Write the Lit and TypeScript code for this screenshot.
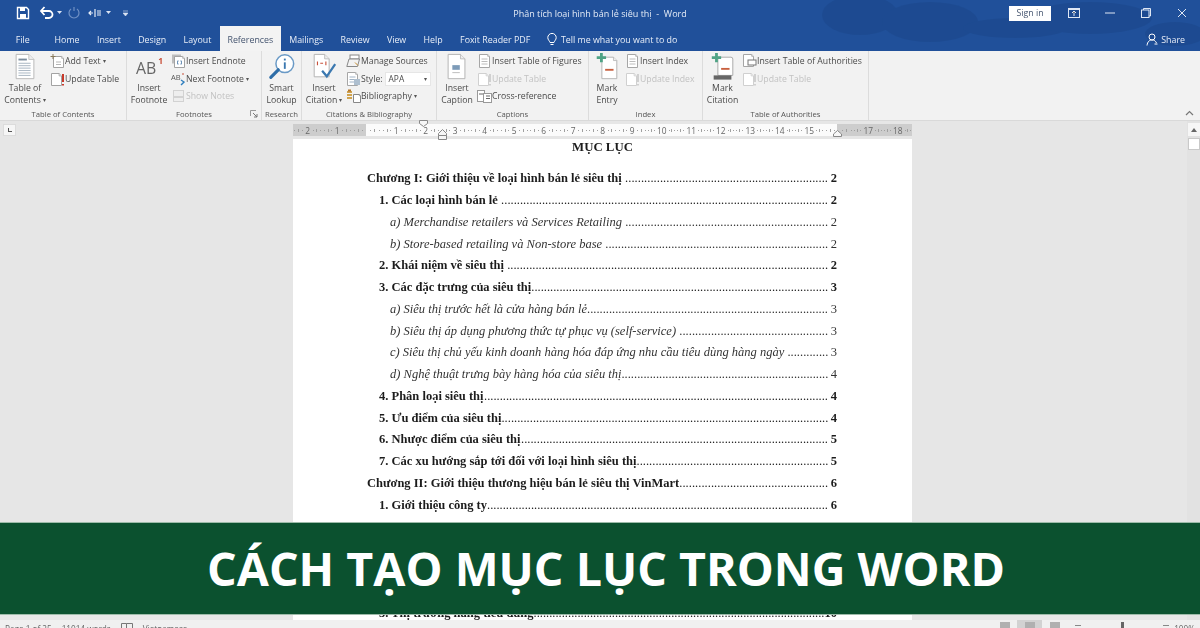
import { LitElement, html, css, svg, nothing } from "lit";
import { customElement } from "lit/decorators.js";

const GR = "#a3a3a3";
const LT = "#d0d0d0";
const page = (x: number, y: number, w: number, h: number, c = GR, f = 7) => svg`<path d="M${x} ${y}h${w - f * 0.6}l${f * 0.6} ${f * 0.6}V${y + h}H${x}z" fill="#fff" stroke=${c} stroke-width="1"/><path d="M${x + w - f * 0.6} ${y}v${f * 0.6}h${f * 0.6}" fill="#eee" stroke=${c} stroke-width=".8"/>`;
const lines = (x: number, y: number, w: number, n: number, c = "#b5b5b5", s = 2.5) => {
  const o = [];
  for (let i = 0; i < n; i++) o.push(svg`<path d="M${x} ${y + i * s}h${w}" stroke=${c} stroke-width="1"/>`);
  return o;
};
const up = (c: string) => svg`${page(1.5, 1.5, 10, 12, c, 4)}<path d="M13 2v8M13 12v1.5" stroke=${c === GR ? "#c8382a" : c} stroke-width="2"/>`;

const icons: Record<string, unknown> = {
  toc: svg`<svg width="26" height="28" viewBox="0 0 26 30">${page(3.5, 1.5, 19, 26, "#b5b5b5", 9)}<path d="M6 7h9" stroke="#7b8c9d" stroke-width="2"/>${lines(6, 11, 13, 6, "#a5b3c0", 2.6)}</svg>`,
  addText: svg`<svg width="15" height="14" viewBox="0 0 15 14">${page(3.5, 2.5, 10, 11, GR, 3)}${lines(6, 8, 5, 2)}<path d="M3 0v5M.5 2.5h5" stroke="#8a7a5a" stroke-width="1"/></svg>`,
  update: svg`<svg width="15" height="14" viewBox="0 0 15 14">${up(GR)}</svg>`,
  updateOff: svg`<svg width="15" height="14" viewBox="0 0 15 14">${up(LT)}</svg>`,
  ab: svg`<svg width="34" height="28" viewBox="0 0 34 30"><text x="3" y="23" font-family="Open Sans" font-size="17" fill="#666">AB</text><text x="27" y="12" font-family="Open Sans" font-size="9" font-weight="700" fill="#c8503a">1</text></svg>`,
  endnote: svg`<svg width="15" height="14" viewBox="0 0 15 14"><rect x="1" y=".5" width="9" height="9" fill="#bdbdbd"/>${page(3.5, 2.5, 10, 11, GR, 3)}<path d="M7 6.500q-1 2 0 4M10 6.500q1 2 0 4" stroke="#3f6f9f" fill="none"/></svg>`,
  next: svg`<svg width="15" height="14" viewBox="0 0 15 14"><text x="0" y="8" font-family="Open Sans" font-size="7.5" fill="#555">AB</text><path d="M12 1v2" stroke="#c8503a"/><path d="M10 8l3 2-3 3" stroke="#2f7fbf" stroke-width="1.4" fill="none"/></svg>`,
  notes: svg`<svg width="15" height="14" viewBox="0 0 15 14"><rect x="2.5" y="1.5" width="10" height="11" fill="#eee" stroke="#d2d2d2"/><path d="M3 8h9" stroke="#d2d2d2" stroke-width="2"/></svg>`,
  lookup: svg`<svg width="30" height="28" viewBox="0 0 30 30"><circle cx="18" cy="11.5" r="9.5" fill="#fff" stroke="#6a9ac6" stroke-width="1.6"/><path d="M18 10v7" stroke="#3b78b0" stroke-width="2"/><path d="M18 6v2" stroke="#3b78b0" stroke-width="2"/><path d="M11 18L3 26" stroke="#2f6ea8" stroke-width="3.4" stroke-linecap="round"/></svg>`,
  citation: svg`<svg width="30" height="28" viewBox="0 0 30 30">${page(4.5, 1.5, 16, 24, "#b0b0b0", 8)}<path d="M8 9v4M11 11h3M17 9v4" stroke="#c8503a" stroke-width="1.2"/><path d="M13 19l5 6 9-13" stroke="#3b78b0" stroke-width="2.4" fill="none"/></svg>`,
  manage: svg`<svg width="15" height="14" viewBox="0 0 15 14"><rect x="4" y="1" width="9" height="4" fill="#fff" stroke="#888"/><path d="M.8 12.500L3 5h10.500l-2 7.500z" fill="#f2f2f2" stroke="#888"/><path d="M9 8.500l3 3" stroke="#c68b2c"/></svg>`,
  style: svg`<svg width="15" height="14" viewBox="0 0 15 14">${page(1.5, .5, 10, 13, "#a6a6a6", 3)}${lines(3.5, 5, 6, 3, "#a0b3c6", 2.5)}<rect x="8" y="7" width="6" height="6" fill="#aebfcf"/></svg>`,
  bib: svg`<svg width="15" height="14" viewBox="0 0 15 14"><path d="M1 3h5M1 6h5M1 9h5" stroke="#d0a44f" stroke-width="2"/><rect x="2" y=".5" width="3" height="2" fill="#b5762a"/>${page(7.5, 5.5, 7, 8, "#888", 2)}</svg>`,
  caption: svg`<svg width="22" height="28" viewBox="0 0 22 30">${page(1.5, 1.5, 18, 26, "#b0b0b0", 8)}<rect x="6" y="13" width="8" height="5" fill="#7d9bb8"/><path d="M6 21h8" stroke="#bbb"/></svg>`,
  figures: svg`<svg width="15" height="14" viewBox="0 0 15 14">${page(2.5, .5, 10, 13, "#a6a6a6", 3)}${lines(4.5, 5, 6, 3, "#bcbcbc", 2.5)}</svg>`,
  cross: svg`<svg width="15" height="14" viewBox="0 0 15 14"><rect x=".5" y="1.5" width="7" height="11" fill="#fff" stroke="#999"/><rect x="6.5" y="4.5" width="8" height="9" fill="#fff" stroke="#999"/><path d="M2 5h4M9 7h4M9 9.500h4" stroke="#666"/></svg>`,
  entry: svg`<svg width="24" height="28" viewBox="0 0 24 30">${page(6.5, 4.5, 16, 23, "#b0b0b0", 6)}<path d="M10 18h9" stroke="#c8603f" stroke-width="2"/><path d="M6 0v10M1 5h10" stroke="#4fa385" stroke-width="3"/></svg>`,
  cite: svg`<svg width="26" height="28" viewBox="0 0 26 30"><path d="M7.500 4.500h14a2 2 0 0 1 2 2V24h-16z" fill="#fff" stroke="#a6a6a6"/><path d="M11 17h9" stroke="#c8603f" stroke-width="2"/><rect x="3" y="24" width="19" height="4.500" fill="#666"/><path d="M6 0v10M1 5h10" stroke="#4fa385" stroke-width="3"/></svg>`,
  authorities: svg`<svg width="15" height="14" viewBox="0 0 15 14">${page(1.5, .5, 10, 12, "#a6a6a6", 3)}<rect x="6" y="6" width="8" height="5" fill="#fff" stroke="#777"/></svg>`,
};

type Small = { icon: string; text: string; off?: boolean; caret?: boolean; combo?: boolean };
type Group = { w: number; bigW: number; big: [string, string, string, boolean?]; small: Small[]; label: string; launcher?: boolean };

const groups: Group[] = [
  { w: 127, bigW: 50, big: ["toc", "Table of", "Contents", true], label: "Table of Contents", small: [
    { icon: "addText", text: "Add Text", caret: true }, { icon: "update", text: "Update Table" }] },
  { w: 135, bigW: 44, big: ["ab", "Insert", "Footnote"], label: "Footnotes", launcher: true, small: [
    { icon: "endnote", text: "Insert Endnote" }, { icon: "next", text: "Next Footnote", caret: true }, { icon: "notes", text: "Show Notes", off: true }] },
  { w: 40, bigW: 39, big: ["lookup", "Smart", "Lookup"], label: "Research", small: [] },
  { w: 135, bigW: 44, big: ["citation", "Insert", "Citation", true], label: "Citations & Bibliography", small: [
    { icon: "manage", text: "Manage Sources" }, { icon: "style", text: "Style:", combo: true }, { icon: "bib", text: "Bibliography", caret: true }] },
  { w: 152, bigW: 40, big: ["caption", "Insert", "Caption"], label: "Captions", small: [
    { icon: "figures", text: "Insert Table of Figures" }, { icon: "updateOff", text: "Update Table", off: true }, { icon: "cross", text: "Cross-reference" }] },
  { w: 114, bigW: 36, big: ["entry", "Mark", "Entry"], label: "Index", small: [
    { icon: "figures", text: "Insert Index" }, { icon: "updateOff", text: "Update Index", off: true }] },
  { w: 166, bigW: 39, big: ["cite", "Mark", "Citation"], label: "Table of Authorities", small: [
    { icon: "authorities", text: "Insert Table of Authorities" }, { icon: "updateOff", text: "Update Table", off: true }] },
];

const tabs = ["File", "Home", "Insert", "Design", "Layout", "References", "Mailings", "Review", "View", "Help", "Foxit Reader PDF"];

const toc: [number, string, string][] = [
  [0, "Chương I: Giới thiệu về loại hình bán lẻ siêu thị ", "2"],
  [1, "1. Các loại hình bán lẻ ", "2"],
  [2, "a) Merchandise retailers và Services Retailing ", "2"],
  [2, "b) Store-based retailing và Non-store base ", "2"],
  [1, "2. Khái niệm về siêu thị ", "2"],
  [1, "3. Các đặc trưng của siêu thị", "3"],
  [2, "a) Siêu thị trước hết là cửa hàng bán lẻ", "3"],
  [2, "b) Siêu thị áp dụng phương thức tự phục vụ (self-service) ", "3"],
  [2, "c) Siêu thị chủ yếu kinh doanh hàng hóa đáp ứng nhu cầu tiêu dùng hàng ngày ", "3"],
  [2, "d) Nghệ thuật trưng bày hàng hóa của siêu thị", "4"],
  [1, "4. Phân loại siêu thị", "4"],
  [1, "5. Ưu điểm của siêu thị", "4"],
  [1, "6. Nhược điểm của siêu thị", "5"],
  [1, "7. Các xu hướng sắp tới đối với loại hình siêu thị", "5"],
  [0, "Chương II: Giới thiệu thương hiệu bán lẻ siêu thị VinMart", "6"],
  [1, "1. Giới thiệu công ty", "6"],
];

const rulerLabels = ["2", "1", "", ...Array.from({ length: 18 }, (_, i) => (i === 15 ? "" : String(i + 1)))];
const DOT_W = 3.125;

@customElement("app-root")
export class AppRoot extends LitElement {
  static styles = css`
    :host { display: block; width: 1200px; height: 628px; position: relative; overflow: hidden; font-family: "Open Sans", sans-serif; }
    .window { width: 1200px; height: 628px; display: flex; flex-direction: column; background: #e6e6e6; filter: blur(.35px); }
    .head { height: 51px; background: #20509a; color: #fff; position: relative; flex: none; display: flex; flex-direction: column; overflow: hidden; }
    .clouds { position: absolute; left: 800px; top: 0; }
    .titlebar { height: 26px; display: grid; grid-template-columns: 1fr auto 1fr; align-items: center; position: relative; }
    .qa { display: flex; align-items: center; padding-left: 16px; }
    .qa svg { display: block; }
    .title { font-size: 9px; color: #e4ebf6; }
    .winctl { display: flex; justify-content: flex-end; align-items: center; }
    .signin { width: 42px; height: 15px; background: #fff; color: #44546f; font-size: 8.8px; display: flex; align-items: center; justify-content: center; margin-right: 5px; }
    .wbtn { width: 36px; display: flex; justify-content: center; }
    .tabs { height: 25px; display: flex; align-items: stretch; padding-left: 7px; position: relative; font-size: 8.85px; color: #e8eef8; }
    .tab { padding: 2px 8.7px 0; display: flex; align-items: center; box-sizing: border-box; }
    .tab.file { margin-right: 7.5px; }
    .tab.active { background: #f3f3f3; color: #44546f; padding: 2px 7.3px 0; }
    .tell { display: flex; align-items: center; gap: 4px; margin-left: 8px; padding-top: 2px; }
    .share { margin-left: auto; display: flex; align-items: center; gap: 3px; padding: 2px 15px 0 0; }
    .ribbon { height: 69px; flex: none; background: #f2f2f2; display: flex; color: #4a4a4a; font-size: 8.7px; position: relative; border-bottom: 1px solid #d9d9d9; }
    .group { flex: none; border-right: 1px solid #dcdcdc; box-sizing: border-box; display: flex; flex-direction: column; position: relative; }
    .gbody { height: 57px; display: flex; }
    .glabel { text-align: center; font-size: 7.7px; color: #555; line-height: 12px; }
    .launcher { position: absolute; right: 3px; bottom: 2px; }
    .big { flex: none; display: flex; flex-direction: column; align-items: center; padding-top: 2px; }
    .bi { height: 28px; display: flex; align-items: center; justify-content: center; }
    .lbl { line-height: 12.4px; white-space: nowrap; text-align: center; margin-top: 1px; }
    .caret { font-size: 6px; vertical-align: 1px; color: #555; margin-left: 2px; }
    .smalls { display: flex; flex-direction: column; padding-top: 1.5px; }
    .s { height: 17.5px; display: flex; align-items: center; white-space: nowrap; }
    .s svg { flex: none; }
    .s.off { color: #c2c2c2; }
    .combo { width: 46px; height: 14px; background: #fff; border: 1px solid #e6e6e6; margin-left: 2px; display: flex; align-items: center; justify-content: space-between; padding: 0 3px; box-sizing: border-box; font-size: 8.4px; }
    .collapse { position: absolute; left: 1185px; top: 59px; }
    .work { flex: 1; display: flex; min-height: 0; }
    .canvas { flex: 1; display: flex; flex-direction: column; min-width: 0; }
    .rulerrow { height: 18px; flex: none; display: flex; align-items: center; padding-left: 3px; box-sizing: border-box; }
    .tabstop { width: 13px; height: 12px; background: #f6f6f6; border: 1px solid #dcdcdc; box-sizing: border-box; margin-right: 277px; position: relative; }
    .tabstop::after { content: ""; position: absolute; left: 4px; top: 3px; width: 3px; height: 3px; border-left: 1px solid #555; border-bottom: 1px solid #555; }
    .ruler { width: 619px; height: 12px; position: relative; display: flex; background: linear-gradient(90deg, #cdcdcd 73px, #fbfbfb 73px, #fbfbfb 544px, #cdcdcd 544px); font-size: 8.4px; color: #666; }
    .cell { width: 29.5px; flex: none; display: flex; align-items: center; justify-content: space-around; }
    .cell i { width: 1px; height: 1px; background: #a0a0a0; display: block; }
    .cell i.t { height: 3px; }
    .marker { position: absolute; }
    .page { width: 619px; margin-left: 293px; flex: 1; min-height: 0; background: #fff; overflow: hidden; font-family: "Liberation Serif", serif; font-size: 12.5px; color: #1c1c1c; box-sizing: border-box; padding: 0 75px 0 74px; }
    .h { text-align: center; font-weight: 700; line-height: 16px; margin: 0 0 13.4px 0; font-size: 12.8px; padding-left: 1px; }
    .row { height: 21.75px; line-height: 21.75px; display: flex; white-space: pre; }
    .gap { height: 87px; }
    .d { flex: 1; min-width: 0; text-align: right; font-weight: 400; font-style: normal; overflow: hidden; }
    .n { flex: none; min-width: 9px; text-align: right; font-weight: 700; font-style: normal; }
    .l0, .l1 { font-weight: 700; }
    .l1 { padding-left: 12px; }
    .l2 { padding-left: 23px; font-style: italic; color: #333; }
    .l2 .n { font-weight: 400; }
    .scroll { width: 13px; flex: none; background: #e2e2e2; display: flex; flex-direction: column; align-items: center; padding-top: 2px; gap: 2px; box-sizing: border-box; }
    .sbtn { width: 12px; height: 13px; background: #f6f6f6; display: flex; align-items: center; justify-content: center; }
    .sthumb { width: 12px; height: 12px; background: #fff; border: 1px solid #c9c9c9; box-sizing: border-box; }
    .status { height: 8px; flex: none; background: #f0f0f0; position: relative; overflow: hidden; font-size: 8.2px; color: #666; display: flex; }
    .st { display: flex; gap: 10px; padding: 3px 0 0 5px; line-height: 11px; white-space: nowrap; align-items: flex-start; }
    .sr { margin-left: auto; display: flex; align-items: flex-start; padding: 0 5px 0 0; line-height: 11px; }
    .vb { width: 25px; height: 8px; display: flex; justify-content: center; padding-top: 2px; box-sizing: border-box; }
    .vb.on { background: #d2d2d2; }
    .vb b { width: 10px; height: 8px; background: #b0b0b0; display: block; }
    .zoomer { display: flex; align-items: center; width: 107px; padding: 3px 5px 0 8px; box-sizing: border-box; justify-content: space-between; height: 8px; }
    .zoomer b { display: block; background: #666; width: 3px; height: 8px; }
    .zoomer u { display: block; background: #888; width: 6px; height: 1px; }
    .pct { padding-top: 3px; }
    .banner { position: absolute; left: 0; top: 522px; width: 1200px; height: 93px; box-sizing: border-box; background: #0b512f; border-top: 1.5px solid #9dbba9; border-bottom: 1.5px solid #9dbba9; color: #fff; font-family: "Open Sans", sans-serif; font-weight: 700; font-size: 46.6px; display: flex; align-items: center; justify-content: center; padding-left: 12px; line-height: 1; white-space: nowrap; }
  `;

  firstUpdated() {
    this.renderRoot.querySelectorAll<HTMLElement>(".d").forEach((el) => {
      const w = el.clientWidth;
      const n = Math.floor(w / DOT_W);
      el.textContent = ".".repeat(n);
      el.style.letterSpacing = `${w / n - DOT_W - 0.001}px`;
    });
  }

  private smallItem(s: Small) {
    return html`<div class="s ${s.off ? "off" : ""}">${icons[s.icon]}<span>${s.text}</span>${s.caret ? html`<span class="caret">▾</span>` : nothing}${s.combo ? html`<span class="combo"><span>APA</span><span class="caret">▾</span></span>` : nothing}</div>`;
  }

  private group(g: Group) {
    return html`<div class="group" style="width:${g.w}px">
      <div class="gbody">
        <div class="big" style="width:${g.bigW}px">
          <div class="bi">${icons[g.big[0]]}</div>
          <div class="lbl">${g.big[1]}<br />${g.big[2]}${g.big[3] ? html`<span class="caret">▾</span>` : nothing}</div>
        </div>
        ${g.small.length ? html`<div class="smalls">${g.small.map((s) => this.smallItem(s))}</div>` : nothing}
      </div>
      <div class="glabel">${g.label}</div>
      ${g.launcher ? html`<svg class="launcher" width="8" height="8" viewBox="0 0 8 8"><path d="M.5 6V.5H6" stroke="#999" fill="none"/><path d="M3 3l4 4M7 4v3H4" stroke="#777" fill="none"/></svg>` : nothing}
    </div>`;
  }

  private tocRow([l, t, n]: [number, string, string]) {
    return html`<div class="row l${l}"><span>${t}</span><span class="d"></span><span class="n">${n}</span></div>`;
  }

  render() {
    return html`
      <div class="window">
        <div class="head">
          <svg class="clouds" width="400" height="51" viewBox="0 0 400 51"><g fill="#1b4689" opacity=".5"><ellipse cx="60" cy="15" rx="38" ry="20"/><ellipse cx="130" cy="22" rx="48" ry="20"/><ellipse cx="215" cy="28" rx="52" ry="10"/><ellipse cx="290" cy="18" rx="62" ry="16"/><ellipse cx="375" cy="34" rx="30" ry="12"/></g></svg>
          <div class="titlebar">
            <div class="qa">
              <svg width="14" height="14" viewBox="0 0 14 14"><path d="M1.500 1.500h9l2 2v9h-11z" fill="none" stroke="#fff" stroke-width="1.4"/><rect x="4" y="1.500" width="5" height="3.500" fill="#fff"/><rect x="4" y="8" width="6" height="4.500" fill="#fff"/></svg>
              <svg style="margin-left:9px" width="16" height="14" viewBox="0 0 16 14"><path d="M2 5h8a3.500 3.500 0 0 1 0 7H6" stroke="#fff" stroke-width="1.8" fill="none"/><path d="M5.500 1L2 5l3.500 4" stroke="#fff" stroke-width="1.8" fill="none"/></svg>
              <svg style="margin-left:2px" width="5" height="4" viewBox="0 0 5 4"><path d="M0 0h5L2.500 3z" fill="#dbe4f3"/></svg>
              <svg style="margin-left:6px" width="12" height="14" viewBox="0 0 12 14"><path d="M3 3a5 5 0 1 0 6 0M6 1v4" stroke="#6f90c4" stroke-width="1.2" fill="none"/></svg>
              <svg style="margin-left:8px" width="14" height="10" viewBox="0 0 14 10"><path d="M7 1v8M1 5h4M3 3L1 5l2 2M9 3h4M9 5h4M9 7h4" stroke="#e7edf7" stroke-width="1.2" fill="none"/></svg>
              <svg style="margin-left:4px" width="5" height="4" viewBox="0 0 5 4"><path d="M0 0h5L2.500 3z" fill="#dbe4f3"/></svg>
              <svg style="margin-left:12px" width="5" height="6" viewBox="0 0 5 6"><path d="M0 1h5M0 3h5L2.500 6z" stroke="#dbe4f3" stroke-width=".6" fill="#dbe4f3"/></svg>
            </div>
            <div class="title">Phân tích loại hình bán lẻ siêu thị&nbsp; -&nbsp; Word</div>
            <div class="winctl">
              <div class="signin">Sign in</div>
              <div class="wbtn"><svg width="12" height="10" viewBox="0 0 12 10"><rect x=".5" y=".5" width="11" height="9" fill="none" stroke="#dfe7f4"/><path d="M6 8V3M4 5l2-2 2 2M1 1.500h10" stroke="#dfe7f4"/></svg></div>
              <div class="wbtn"><svg width="10" height="2" viewBox="0 0 10 2"><path d="M0 1h10" stroke="#dfe7f4"/></svg></div>
              <div class="wbtn"><svg width="10" height="10" viewBox="0 0 10 10"><rect x=".5" y="2" width="7.500" height="7.500" fill="none" stroke="#dfe7f4"/><path d="M2.500 2V.5h7V8H8" fill="none" stroke="#dfe7f4"/></svg></div>
              <div class="wbtn"><svg width="10" height="10" viewBox="0 0 10 10"><path d="M1 1l8 8M9 1l-8 8" stroke="#dfe7f4"/></svg></div>
            </div>
          </div>
          <div class="tabs">
            ${tabs.map((t, i) => html`<div class="tab ${i === 0 ? "file" : ""} ${t === "References" ? "active" : ""}">${t}</div>`)}
            <div class="tell">
              <svg width="10" height="13" viewBox="0 0 10 13"><path d="M3 9.500C2.500 7.500.8 7 .8 4.600a4.200 4.200 0 0 1 8.400 0C9.200 7 7.500 7.500 7 9.500zM3.500 11.500h3" stroke="#fff" fill="none"/></svg>
              <span>Tell me what you want to do</span>
            </div>
            <div class="share">
              <svg width="12" height="13" viewBox="0 0 12 13"><circle cx="6" cy="4" r="3" fill="none" stroke="#fff"/><path d="M1 12.500c.5-4 2.500-5.500 5-5.500s3.500 1 4.500 3M8.500 11h3" stroke="#fff" fill="none"/></svg>
              <span>Share</span>
            </div>
          </div>
        </div>
        <div class="ribbon">
          ${groups.map((g) => this.group(g))}
          <svg class="collapse" width="9" height="6" viewBox="0 0 9 6"><path d="M1 5l3.500-3.500L8 5" stroke="#777" stroke-width="1.2" fill="none"/></svg>
        </div>
        <div class="work">
          <div class="canvas">
            <div class="rulerrow">
              <div class="tabstop"></div>
              <div class="ruler">
                ${rulerLabels.map((l) => html`<div class="cell"><i></i><i class="t"></i><i></i><span>${l}</span><i></i><i class="t"></i><i></i></div>`)}
                <svg class="marker" style="left:126px;top:-4px" width="9" height="7" viewBox="0 0 9 7"><path d="M.5.5h8v3l-4 3-4-3z" fill="#f7f7f7" stroke="#888"/></svg>
                <svg class="marker" style="left:145px;top:5px" width="9" height="11" viewBox="0 0 9 11"><path d="M.5 4.500l4-4 4 4v2h-8zM.5 6.500h8v4h-8z" fill="#f7f7f7" stroke="#888"/></svg>
                <svg class="marker" style="left:540px;top:6px" width="9" height="7" viewBox="0 0 9 7"><path d="M.5 6.500V4l4-3.500 4 3.500v2.500z" fill="#f7f7f7" stroke="#888"/></svg>
              </div>
            </div>
            <div class="page">
              <div class="h">MỤC LỤC</div>
              ${toc.map((r) => this.tocRow(r))}
              <div class="gap"></div>
              ${this.tocRow([1, "3. Thị trường hàng tiêu dùng", "10"])}
            </div>
          </div>
          <div class="scroll">
            <div class="sbtn"><svg width="6" height="4" viewBox="0 0 6 4"><path d="M3 0l3 4H0z" fill="#666"/></svg></div>
            <div class="sthumb"></div>
          </div>
        </div>
        <div class="status">
          <div class="st"><span>Page 1 of 25</span><span>11014 words</span><svg width="12" height="10" viewBox="0 0 12 10"><path d="M.5 9.500v-9h5v9M5.500.5h6v9" stroke="#777" fill="none"/></svg><span>Vietnamese</span></div>
          <div class="sr">
            <div class="vb"><b></b></div><div class="vb on"><b></b></div><div class="vb"><b></b></div>
            <div class="zoomer"><u></u><b></b><u></u></div>
            <span class="pct">100%</span>
          </div>
        </div>
      </div>
      <div class="banner">CÁCH TẠO MỤC LỤC TRONG WORD</div>
    `;
  }
}
